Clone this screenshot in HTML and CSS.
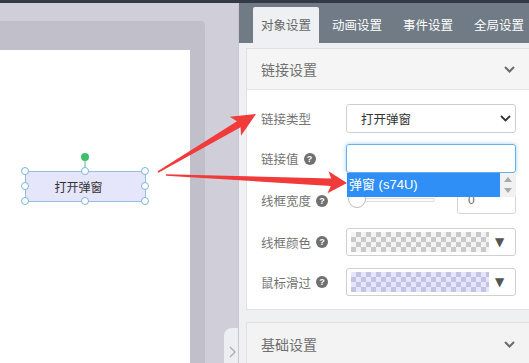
FILE: index.html
```html
<!DOCTYPE html>
<html lang="zh">
<head>
<meta charset="utf-8">
<title>链接设置</title>
<link rel="stylesheet" href="styles.css">
</head>
<body>
<div class="topbar"></div>
<div class="main">
  <div class="workspace">
    <div class="stage">
      <div class="canvas">
        <svg class="selection" width="134" height="57" viewBox="0 0 134 57">
          <line x1="67" y1="9" x2="67" y2="17" stroke="#4cc27a" stroke-width="1"/>
          <circle cx="67" cy="6" r="4" fill="#3dbf6e"/>
        </svg>
        <div class="widget">打开弹窗</div>
        <svg class="handles" width="134" height="57" viewBox="0 0 134 57">
          <g fill="#fff" stroke="#7fb2df" stroke-width="1">
            <circle cx="7" cy="20" r="3.5"/><circle cx="67" cy="20" r="3.5"/><circle cx="127" cy="20" r="3.5"/>
            <circle cx="7" cy="35" r="3.5"/><circle cx="127" cy="35" r="3.5"/>
            <circle cx="7" cy="50" r="3.5"/><circle cx="67" cy="50" r="3.5"/><circle cx="127" cy="50" r="3.5"/>
          </g>
        </svg>
      </div>
    </div>
    <div class="collapse">
      <svg width="7" height="12" viewBox="0 0 7 12"><polyline points="1,1 6,6 1,11" fill="none" stroke="#a9abb3" stroke-width="1.2"/></svg>
    </div>
  </div>
  <div class="panel">
    <div class="tabs">
      <div class="tab active">对象设置</div>
      <div class="tab">动画设置</div>
      <div class="tab">事件设置</div>
      <div class="tab">全局设置</div>
    </div>
    <div class="panel-body">
      <section class="card">
        <div class="card-head">
          <span>链接设置</span>
          <svg width="11" height="7" viewBox="0 0 11 7"><polyline points="1,1 5.5,5.5 10,1" fill="none" stroke="#6b6b6b" stroke-width="2"/></svg>
        </div>
        <div class="card-body">
          <div class="row row-1">
            <div class="label">链接类型</div>
            <div class="field select">
              <span>打开弹窗</span>
              <svg width="11" height="7" viewBox="0 0 11 7"><polyline points="1,1 5.5,5.5 10,1" fill="none" stroke="#333" stroke-width="1.8"/></svg>
            </div>
          </div>
          <div class="row row-2">
            <div class="label">链接值<span class="help">?</span></div>
            <div class="field input-wrap">
              <div class="input focus"></div>
              <div class="dropdown">
                <div class="option">弹窗 (s74U)</div>
                <div class="scroll">
                  <svg width="8" height="5" viewBox="0 0 8 5"><polygon points="4,0 8,5 0,5" fill="#a8a8a8"/></svg>
                  <svg width="8" height="5" viewBox="0 0 8 5"><polygon points="0,0 8,0 4,5" fill="#a8a8a8"/></svg>
                </div>
              </div>
            </div>
          </div>
          <div class="row row-3">
            <div class="label">线框宽度<span class="help">?</span></div>
            <div class="field width-field">
              <div class="slider">
                <div class="track"></div>
                <div class="thumb"></div>
              </div>
              <div class="number">0</div>
            </div>
          </div>
          <div class="row row-4">
            <div class="label">线框颜色<span class="help">?</span></div>
            <div class="field color">
              <div class="swatch checker-gray"></div>
              <span class="caret">▼</span>
            </div>
          </div>
          <div class="row row-5">
            <div class="label">鼠标滑过<span class="help">?</span></div>
            <div class="field color">
              <div class="swatch checker-lav"></div>
              <span class="caret">▼</span>
            </div>
          </div>
        </div>
      </section>
      <section class="card card-next">
        <div class="card-head">
          <span>基础设置</span>
          <svg width="11" height="7" viewBox="0 0 11 7"><polyline points="1,1 5.5,5.5 10,1" fill="none" stroke="#6b6b6b" stroke-width="2"/></svg>
        </div>
      </section>
    </div>
  </div>
</div>
<svg class="annot" width="529" height="363" viewBox="0 0 529 363">
  <polygon fill="#f13a3a" points="157.6,171.3 237.0,121.2 229.8,116.7 256,114 241.0,135.7 240.6,127.2 158.4,172.7"/>
  <polygon fill="#f13a3a" points="166.0,174.2 331.2,178.6 328.5,171.2 347,183 327.5,193.2 330.8,186.0 166.0,175.8"/>
</svg>
</body>
</html>
```

FILE: styles.css
```css
* { box-sizing: border-box; }
html, body { margin: 0; padding: 0; }
body {
  width: 529px;
  height: 363px;
  overflow: hidden;
  position: relative;
  font-family: "Liberation Sans", "Noto Sans CJK SC", sans-serif;
  background: #d0cfd9;
}
.topbar { height: 3px; background: #343948; }
.main { display: flex; height: 360px; }

.workspace {
  width: 238px;
  flex: none;
  background: #d0cfd9;
  padding-top: 18px;
  position: relative;
}
.stage {
  width: 205px;
  height: 342px;
  background: #c1c0ca;
  border-top-right-radius: 4px;
  padding-top: 29px;
}
.canvas {
  width: 190px;
  height: 100%;
  background: #fff;
  position: relative;
}
.widget {
  position: absolute;
  left: 25px;
  top: 121px;
  width: 121px;
  height: 31px;
  background: #e5e5fb;
  border: 1px solid #93bde3;
  font-size: 12px;
  color: #333;
  display: flex;
  align-items: center;
  justify-content: center;
  padding-right: 14px;
  font-family: "Noto Sans CJK SC", sans-serif;
}
.selection, .handles {
  position: absolute;
  left: 18px;
  top: 101px;
}
.handles { z-index: 2; }
.collapse {
  position: absolute;
  right: 0;
  bottom: 0;
  width: 14px;
  height: 35px;
  background: #eceef1;
  border-top-left-radius: 8px;
  display: flex;
  align-items: flex-end;
  justify-content: center;
  padding-bottom: 5px;
  padding-left: 2px;
}

.panel {
  width: 291px;
  flex: none;
  background: #eef0f2;
  border-left: 1px solid #c8c8d0;
}
.tabs {
  height: 40px;
  background: #707b86;
  display: flex;
  align-items: flex-end;
  gap: 5px;
  padding-left: 14px;
}
.tab {
  height: 36px;
  line-height: 36px;
  padding: 0 8px;
  color: #fff;
  font-size: 12.5px;
  white-space: nowrap;
  font-family: "Noto Sans CJK SC", sans-serif;
}
.tab.active {
  background: #eef0f3;
  color: #666;
  border-radius: 2px 2px 0 0;
}
.panel-body { padding: 5px 0 0 7px; }

.card {
  background: #fff;
  border: 1px solid #e1e1e4;
  border-right: none;
}
.card-next { margin-top: 12px; }
.card-head {
  height: 41px;
  background: #f5f5f5;
  border-bottom: 1px solid #e6e6e6;
  display: flex;
  align-items: center;
  justify-content: space-between;
  padding: 0 14px 0 14px;
  font-size: 14px;
  color: #707070;
  font-family: "Noto Sans CJK SC", sans-serif;
}
.card-next .card-head { background: #f3f3f3; border-bottom: none; height: 42px; }
.card-body { padding: 14px 13px 13px 14px; }

.row { display: flex; align-items: center; }
.row-1 { height: 29px; margin-bottom: 11px; }
.row-2 { height: 29px; margin-bottom: 14px; }
.row-3 { height: 27px; margin-bottom: 14px; }
.row-4 { height: 28px; margin-bottom: 12px; }
.row-5 { height: 28px; }

.label {
  width: 85px;
  flex: none;
  font-size: 12.5px;
  color: #737373;
  display: flex;
  align-items: center;
  font-family: "Noto Sans CJK SC", sans-serif;
}
.help {
  width: 12px;
  height: 12px;
  border-radius: 50%;
  background: #707070;
  color: #fff;
  font-size: 9px;
  font-weight: bold;
  line-height: 12px;
  text-align: center;
  margin-left: 5px;
  font-family: "Liberation Sans", sans-serif;
}
.field { width: 170px; height: 100%; flex: none; }
.select {
  border: 1px solid #cfcfcf;
  border-radius: 3px;
  display: flex;
  align-items: center;
  justify-content: space-between;
  padding: 0 4px 0 14px;
  font-size: 12.5px;
  color: #333;
  font-family: "Noto Sans CJK SC", sans-serif;
}
.input-wrap { position: relative; }
.input {
  height: 100%;
  border: 1px solid #66afe9;
  border-radius: 3px;
  box-shadow: 0 0 4px rgba(102, 175, 233, 0.6);
}
.dropdown {
  position: absolute;
  left: 1px;
  right: 0;
  top: 100%;
  height: 24px;
  display: flex;
  z-index: 5;
  background: #fff;
}
.option {
  flex: 1;
  background: #2f8ff7;
  color: #fff;
  font-size: 13px;
  line-height: 24px;
  padding-left: 2px;
  font-family: "Liberation Sans", "Noto Sans CJK SC", sans-serif;
}
.scroll {
  width: 16px;
  background: #f1f1f1;
  display: flex;
  flex-direction: column;
  align-items: center;
  justify-content: space-between;
  padding: 4px 0 4px;
}

.width-field { display: flex; align-items: center; justify-content: space-between; }
.slider { position: relative; width: 111px; height: 100%; }
.track {
  position: absolute;
  left: 10px;
  width: 79px;
  top: 11px;
  height: 4px;
  border: 1px solid #e0e0e0;
  border-radius: 2px;
  background: #fafafa;
}
.thumb {
  position: absolute;
  left: 2px;
  top: 3px;
  width: 18px;
  height: 18px;
  border-radius: 50%;
  background: #fff;
  border: 1px solid #bdbdbd;
}
.number {
  width: 59px;
  height: 100%;
  border: 1px solid #d5d5d5;
  border-radius: 3px;
  font-size: 12px;
  color: #666;
  padding-left: 10px;
  line-height: 25px;
}
.color {
  border: 1px solid #d0d0d0;
  border-radius: 3px;
  display: flex;
  align-items: center;
  padding: 0 4px;
}
.swatch { width: 138px; height: 20px; }
.checker-gray {
  background: conic-gradient(#c9c9c9 25%, #f4f4f4 0 50%, #c9c9c9 0 75%, #f4f4f4 0) 0 0 / 10px 10px;
}
.checker-lav {
  background: conic-gradient(#c3c3e5 25%, #e6e6fa 0 50%, #c3c3e5 0 75%, #e6e6fa 0) 0 0 / 10px 10px;
}
.caret {
  font-size: 12px;
  color: #555;
  margin-left: 6px;
  font-family: "DejaVu Sans", sans-serif;
}

.annot {
  position: absolute;
  left: 0;
  top: 0;
  pointer-events: none;
  z-index: 10;
}
```
